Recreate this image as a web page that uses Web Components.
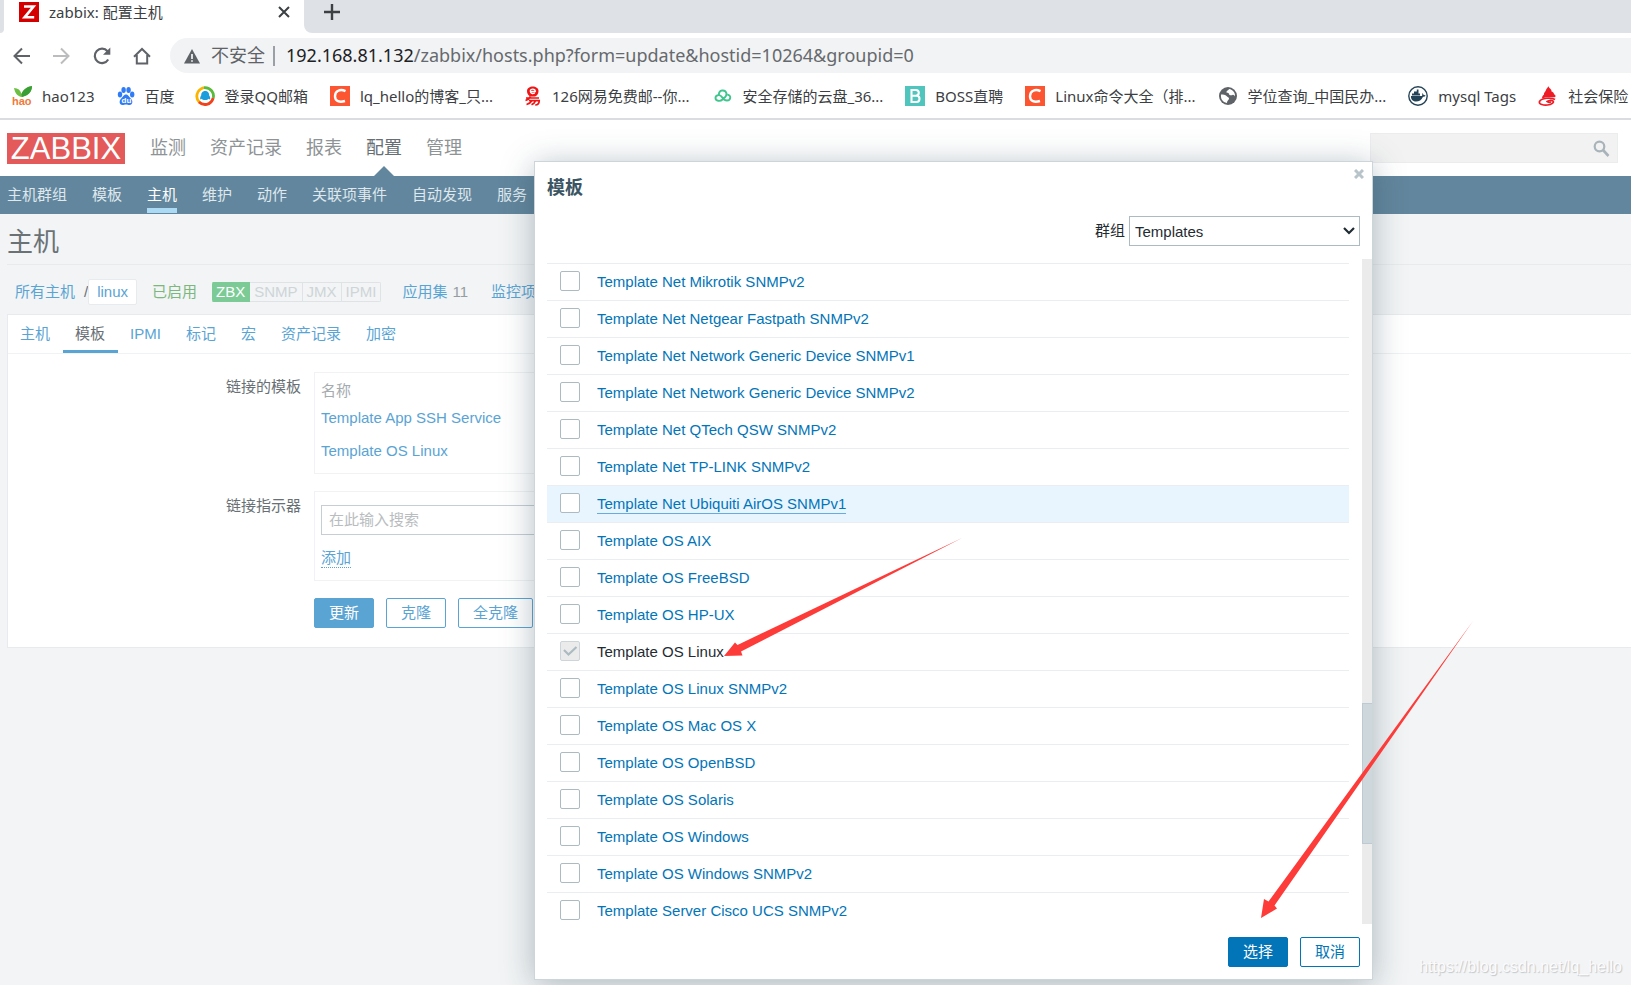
<!DOCTYPE html>
<html lang="zh-CN">
<head>
<meta charset="utf-8">
<title>zabbix: 配置主机</title>
<style>
  html { background: #f2f4f5; }
  body {
    margin: 0; position: relative; min-height: 100vh; overflow: hidden;
    font: 15px/20px "Liberation Sans", "Noto Sans CJK SC", sans-serif; color: #1f2c33;
  }
</style>
</head>
<body>
<browser-chrome></browser-chrome>
<zbx-header></zbx-header>
<host-page></host-page>
<template-dialog></template-dialog>
<arrow-marks></arrow-marks>
<site-mark>https://blog.csdn.net/lq_hello</site-mark>

<script>
const base = `:host, *, *::before, *::after { box-sizing: border-box; } a { text-decoration: none; color: inherit; } button, input, select { font: inherit; margin: 0; }`;

function define(name, html) {
  customElements.define(name, class extends HTMLElement {
    constructor() {
      super();
      this.attachShadow({ mode: 'open' }).innerHTML = `<style>${base}</style>` + html(this);
    }
  });
}

define('bookmark-item', () => `
  <style>
    :host { display: block; flex: none; }
    a { display: flex; align-items: center; gap: 10px; height: 24px; white-space: nowrap; }
    ::slotted(svg) { display: block; flex: none; }
  </style>
  <a href="#"><slot name="icon"></slot><slot></slot></a>`);

define('browser-chrome', () => `
  <style>
    :host { display: block; height: 120px; overflow: hidden; background: #fff; border-bottom: 2px solid #dadce0; color: #3c4043;
      font-family: "Noto Sans", "Noto Sans CJK SC", sans-serif; }
    .strip { display: flex; height: 33px; background: #dee1e6; }
    .edge { width: 4px; height: 33px; background: #dee1e6; border-bottom-right-radius: 4px; }
    .lead { background: #fff; }
    .tab { display: flex; align-items: center; width: 300px; height: 33px; padding: 0 13px 9px 15px; background: #fff; }
    .tab span { flex: 1; margin-left: 10px; font-size: 15px; }
    .rest { flex: 1; display: flex; align-items: center; padding: 0 0 9px 20px; background: #dee1e6; border-bottom-left-radius: 8px; }
    .rest-wrap { flex: 1; display: flex; background: #fff; }
    button { display: flex; border: 0; padding: 0; background: none; }
    .bar { display: flex; align-items: center; height: 45px; padding-left: 12px; gap: 20px; }
    .url { flex: 1; display: flex; align-items: center; height: 35px; margin-left: -2px; padding-left: 14px; border-radius: 18px 0 0 18px; background: #f1f3f4; font-size: 18px; line-height: 24px; color: #5f6368; }
    .url span { padding-bottom: 2px; }
    .url .safe { margin: 0 8px 0 11px; white-space: nowrap; }
    .url i { width: 2px; height: 20px; background: #9aa0a6; margin-right: 11px; }
    .addr { white-space: nowrap; color: #66696d; }
    .addr b { font-weight: 400; color: #202124; }
    nav { display: flex; gap: 22px; height: 40px; padding: 6px 0 0 12px; }
    .near { margin-left: -2px; }
    .wide { margin-left: 9px; }
    .mid { margin-left: 3px; }
  </style>
  <div class="strip">
    <div class="lead"><div class="edge"></div></div>
    <div class="tab">
      <svg width="20" height="20" viewBox="0 0 20 20"><path fill="#d40000" d="M0 0h20v20H0z"/><path d="M5 4.500h9.500L5.600 15.300H15.200" fill="none" stroke="#fff" stroke-width="2.600"/></svg>
      <span>zabbix: 配置主机</span>
      <button aria-label="关闭标签页"><svg width="14" height="14" viewBox="0 0 14 14"><path d="M2 2l10 10M12 2L2 12" stroke="#3c4043" stroke-width="2"/></svg></button>
    </div>
    <div class="rest-wrap"><div class="rest"><button aria-label="新标签页"><svg width="16" height="16" viewBox="0 0 16 16"><path d="M8 0v16M0 8h16" stroke="#3c4043" stroke-width="2.400"/></svg></button></div></div>
  </div>
  <div class="bar">
    <button aria-label="后退"><svg width="20" height="20" viewBox="0 0 20 20"><path d="M18 10H3M10 2.500L2.500 10l7.500 7.500" fill="none" stroke="#5f6368" stroke-width="2"/></svg></button>
    <button aria-label="前进"><svg width="20" height="20" viewBox="0 0 20 20"><path d="M1 10h15M9 2.500L16.500 10 9 17.500" fill="none" stroke="#babcbe" stroke-width="2"/></svg></button>
    <button aria-label="重新加载"><svg width="20" height="20" viewBox="0 0 20 20"><path d="M16.200 13.500A7.200 7.200 0 1 1 15.500 5.200" fill="none" stroke="#5f6368" stroke-width="2.200"/><path d="M18.300 1.500v7.300h-7.300z" fill="#5f6368"/></svg></button>
    <button aria-label="主页"><svg width="20" height="20" viewBox="0 0 20 20"><path d="M2 10.700L10 3l8 7.700M4.800 9v8.500h10.400V9" fill="none" stroke="#5f6368" stroke-width="2"/></svg></button>
    <div class="url">
      <svg width="16" height="16" viewBox="0 0 16 16"><path d="M8 1l8 14.500H0z" fill="#5f6368"/><path d="M7.200 6h1.600v5H7.200zM7.200 12.200h1.600v1.600H7.200z" fill="#fff"/></svg>
      <span class="safe">不安全</span><i></i>
      <span class="addr"><b>192.168.81.132</b>/zabbix/hosts.php?form=update&amp;hostid=10264&amp;groupid=0</span>
    </div>
  </div>
  <nav aria-label="书签">
    <bookmark-item><svg slot="icon" width="20" height="20" viewBox="0 0 20 20"><path d="M2 2c4 0 6.500 2 7.500 6C11 4 14 1 20 0c0 6-4 9.500-10 11C5.500 10.500 3 7 2 2z" fill="#6cbf43"/><path d="M9.500 8C11 4 14 1 20 0c0 6-4 9.500-10 11z" fill="#3a9e36"/><text x="0" y="19" font-family="Liberation Sans" font-weight="bold" font-size="11" fill="#f07a3a">hao</text></svg>hao123</bookmark-item>
    <bookmark-item><svg slot="icon" width="18" height="20" viewBox="0 0 18 20"><g fill="#2f7cf6"><ellipse cx="3" cy="8.500" rx="2.200" ry="2.900"/><ellipse cx="6.600" cy="4" rx="2.200" ry="3"/><ellipse cx="11.600" cy="4" rx="2.200" ry="3"/><ellipse cx="15.200" cy="8.500" rx="2.200" ry="2.900"/><path d="M9 8.500c2.500 0 3 2.500 5 4.300 2 1.700 2 6.200-1.500 6.200-1.500 0-2-.500-3.500-.500S7 19 5.500 19C2 19 2 14.500 4 12.800 6 11 6.500 8.500 9 8.500z"/></g><text x="4.500" y="17" font-family="Liberation Sans" font-weight="bold" font-size="8" fill="#fff">du</text></svg>百度</bookmark-item>
    <bookmark-item class="near"><svg slot="icon" width="20" height="20" viewBox="0 0 20 20"><g fill="none" stroke-width="2.800"><path d="M4.500 16.500C0 12 1 4 9 1.500" stroke="#fbb500"/><path d="M9 1.600c7-.500 10.500 6 9.200 10.400" stroke="#5aba3c"/><path d="M18.200 12C16 19.500 8 20 4 16" stroke="#f0421c"/></g><path d="M10.200 5c3 0 4 2.200 4 4.500 1 1.200 1.300 3.500.700 3.900l-1.400-.700c-.500 1.800-6.300 1.800-6.800 0l-1.200.700c-.600-.500-.400-2.700.700-3.900 0-2.300 1-4.500 4-4.500z" fill="#1b9ddb"/></svg>登录QQ邮箱</bookmark-item>
    <bookmark-item><svg slot="icon" width="20" height="20" viewBox="0 0 20 20"><path fill="#fc5531" d="M0 0h20v20H0z"/><path d="M15.500 5.200C10 2.500 5 5 5 10.300c0 5 4.500 6.500 10 4.700" fill="none" stroke="#fff" stroke-width="2.400"/></svg>lq_hello的博客_只...</bookmark-item>
    <bookmark-item class="wide"><svg slot="icon" width="18" height="20" viewBox="0 0 18 20"><path d="M3 5c0-6 11.500-6 11.500 0 0 3-1.500 4.500-3.500 5.500H6.500C4.500 9.500 3 8 3 5z" fill="#f01414"/><path d="M6.300 5.500h5C11.300 2.300 6.300 2.300 6.300 5s2.700 3 4.500 1.900" fill="none" stroke="#fff" stroke-width="1.300"/><path d="M2 12h13M6.500 10.500Q5 13.500 1.500 14.500M5 14.700h10.200c0 3-1 4.300-4 4.300M8 14.700Q6.500 17.500 2.500 18.500M11.500 14.700q-.800 2.500-4 4" fill="none" stroke="#f01414" stroke-width="1.700"/></svg>126网易免费邮--你...</bookmark-item>
    <bookmark-item class="mid"><svg slot="icon" width="18" height="18" viewBox="0 0 18 18"><path d="M5 8C4 2.500 11.500 2 12.500 6.500c.500 3-2.500 4.500-4 6-2 2-7 2-7-1.500 0-3.500 4.500-3.500 6-1.500 1 1.500 2.500 4 5.500 4 4 0 4.500-5.500.500-5.800" fill="none" stroke="#3fc58d" stroke-width="1.900"/></svg>安全存储的云盘_36...</bookmark-item>
    <bookmark-item><svg slot="icon" width="20" height="20" viewBox="0 0 20 20"><path fill="#4fc5bd" d="M0 0h20v20H0z"/><path d="M6.500 4h4.300c4 0 4 5.700 0 5.700H6.500zM6.500 9.700h5c4 0 4 6.300 0 6.300h-5z" fill="none" stroke="#fff" stroke-width="2.100"/></svg>BOSS直聘</bookmark-item>
    <bookmark-item><svg slot="icon" width="20" height="20" viewBox="0 0 20 20"><path fill="#fc5531" d="M0 0h20v20H0z"/><path d="M15.500 5.200C10 2.500 5 5 5 10.300c0 5 4.500 6.500 10 4.700" fill="none" stroke="#fff" stroke-width="2.400"/></svg>Linux命令大全（排...</bookmark-item>
    <bookmark-item><svg slot="icon" width="20" height="20" viewBox="0 0 20 20"><circle cx="10" cy="10" r="9" fill="#5f6368"/><path d="M3 8.500c2 0 4.500 0 5.500 1.500s2.500 1 2.500 2.500-1.800 1.500-2 4.500C4.500 16 2.500 13 3 8.500zM11 3c-.500 1.500-2.500 1.500-2.500 3s2.500.500 2.500 2 2.500 1.500 3.500 1 2 .500 2.500 1.500C17.500 7 15 3.500 11 3z" fill="#fff"/></svg>学位查询_中国民办...</bookmark-item>
    <bookmark-item><svg slot="icon" width="20" height="20" viewBox="0 0 20 20"><circle cx="10" cy="10" r="9.200" fill="#fff" stroke="#254356" stroke-width="1.400"/><path d="M3 10h11c.500-1 .300-2.300 0-3 1 .500 1.500 1.200 1.600 2 .800-.200 1.500 0 2 .400-.500 1-1.500 1.300-2.600 1.300C13.500 14 11 15.500 8 15.500c-3.500 0-5.300-2.500-5-5.500zM4 7.600h8v2H4zM6 5.500h4.500v2H6zM8.800 3.500h1.700v2H8.800z" fill="#254356"/></svg>mysql Tags</bookmark-item>
    <bookmark-item><svg slot="icon" width="20" height="20" viewBox="0 0 20 20"><path d="M10.500 0c-.300 2 3.500 3 3 5.500 2.500.500 2 2.500 4 4 .500 1.500-1 2-3 1.800-4-.800-8 .200-10.500 1.200C4 10 5 9.500 6 8.500 5.500 6.500 7.500 6 8 4c.500-1.500 1.500-2 2.500-4z" fill="#ee1c25"/><path d="M17 13.500C13 11 3.500 12 1.500 15.500.500 18.500 6 19.500 9.500 19c4-.500 7-2.500 5.500-4-1.500-1-5-.500-6 .500 1 1 3 .800 4 .500" fill="none" stroke="#ee1c25" stroke-width="1.700"/></svg>社会保险</bookmark-item>
  </nav>`);

define('zbx-header', () => `
  <style>
    :host { display: block; background: #fff; }
    .top { display: flex; align-items: center; height: 56px; padding: 0 13px 0 7px; }
    .logo { display: flex; width: 118px; height: 31px; justify-content: center; align-items: center; background: #e45959; color: #fff; font: 31px/31px "Liberation Sans", sans-serif; }
    .main { display: flex; gap: 24px; margin-left: 25px; font-size: 18px; line-height: 24px; color: #8e9396; }
    .main a { position: relative; }
    .main .on { color: #676f74; }
    .main .on::after { content: ""; position: absolute; left: 8px; top: 30px; border: 10px solid transparent; border-top: 0; border-bottom-color: #62869d; }
    .search { display: flex; align-items: center; margin-left: auto; width: 248px; height: 30px; padding-right: 7px; background: #f2f2f2; border: 1px solid #ebeced; }
    .search input { flex: 1; min-width: 0; border: 0; background: none; outline: 0; }
    .search button { display: flex; border: 0; padding: 0; background: none; }
    .sub { display: flex; gap: 25px; height: 38px; padding: 0 7px; background: #62869d; color: #dfe8ed; line-height: 38px; }
    .sub a { height: 37px; white-space: nowrap; }
    .sub .on { color: #fff; border-bottom: 5px solid #acdaf5; }
  </style>
  <div class="top">
    <a href="#" class="logo">ZABBIX</a>
    <nav class="main"><a href="#">监测</a><a href="#">资产记录</a><a href="#">报表</a><a href="#" class="on">配置</a><a href="#">管理</a></nav>
    <div class="search"><input type="text" aria-label="搜索"><button aria-label="搜索"><svg width="17" height="17" viewBox="0 0 17 17"><circle cx="6.500" cy="6.500" r="4.800" fill="none" stroke="#a9b4ba" stroke-width="2.200"/><path d="M10 10l5.500 6" stroke="#a9b4ba" stroke-width="2.600"/></svg></button></div>
  </div>
  <nav class="sub"><a href="#">主机群组</a><a href="#">模板</a><a href="#" class="on">主机</a><a href="#">维护</a><a href="#">动作</a><a href="#">关联项事件</a><a href="#">自动发现</a><a href="#">服务</a></nav>`);

define('host-page', () => `
  <style>
    :host { display: block; padding-left: 7px; color: #697075; }
    h1 { margin: 0; height: 51px; border-bottom: 1px solid #e8ebed; font-size: 26px; line-height: 56px; font-weight: 400; color: #6b7276; }
    a { color: #5aa4d4; white-space: nowrap; }
    .crumbs { display: flex; align-items: center; height: 49px; padding: 5px 0 0 8px; }
    .crumbs .cur { display: block; height: 26px; padding: 0 8px; border: 1px solid #e8ebed; border-radius: 2px; background: #fff; line-height: 24px; }
    .slash { margin: 0 0 0 9px; }
    .ok { color: #7db77d; margin: 0 15px; }
    .tags { display: flex; height: 20px; margin-right: 21px; border-radius: 2px; overflow: hidden; line-height: 20px; color: #ced4d8; }
    .tags span { padding: 0 4px; border: 1px solid #dfe3e6; border-left: 0; line-height: 18px; }
    .tags .on { background: #7ccb96; border-color: #7ccb96; color: #fff; }
    .count { margin: 0 23px 0 5px; color: #969ca0; }
    .panel { background: #fff; border: 1px solid #e8ebed; border-right: 0; }
    .tabs { display: flex; height: 39px; border-bottom: 1px solid #f0f2f3; }
    .tabs a { padding: 0 13px 0 12px; line-height: 38px; }
    .tabs .on { color: #697075; border-bottom: 3px solid #5aa4d4; }
    form { display: grid; grid-template-columns: 293px 600px; column-gap: 13px; row-gap: 17px; padding: 18px 0 19px; }
    .label { text-align: right; padding-top: 5px; }
    .box { border: 1px solid #f0f2f3; padding: 0 6px; }
    .linked { height: 102px; padding-top: 8px; }
    .linked table { border-collapse: collapse; }
    th { padding: 0; text-align: left; font-weight: 400; height: 20px; color: #a5abaf; }
    td { padding: 0; height: 33px; }
    .pick { height: 90px; padding-top: 13px; }
    .pick input { display: block; width: 480px; height: 30px; padding: 0 7px 2px; border: 1px solid #c5ced3; background: #fff; color: #697075; }
    .pick input::placeholder { color: #b9bdc0; }
    .pick a { display: inline-block; margin-top: 13px; line-height: 19px; height: 20px; border-bottom: 1px dotted #5aa4d4; }
    .actions { grid-column: 2; display: flex; gap: 12px; }
    .actions button { height: 30px; padding: 0 14px; border: 1px solid #5aa4d4; border-radius: 2px; background: #fff; color: #5aa4d4; line-height: 26px; white-space: nowrap; }
    .actions .go { background: #5aa4d4; color: #fff; }
  </style>
  <h1>主机</h1>
  <div class="crumbs">
    <a href="#">所有主机</a><span class="slash">/</span><a href="#" class="cur">linux</a>
    <span class="ok">已启用</span>
    <div class="tags"><span class="on">ZBX</span><span>SNMP</span><span>JMX</span><span>IPMI</span></div>
    <a href="#">应用集</a><span class="count">11</span><a href="#">监控项</a>
  </div>
  <div class="panel">
    <nav class="tabs"><a href="#">主机</a><a href="#" class="on">模板</a><a href="#">IPMI</a><a href="#">标记</a><a href="#">宏</a><a href="#">资产记录</a><a href="#">加密</a></nav>
    <form onsubmit="return false">
      <div class="label">链接的模板</div>
      <div class="box linked"><table><tr><th>名称</th></tr><tr><td><a href="#">Template App SSH Service</a></td></tr><tr><td><a href="#">Template OS Linux</a></td></tr></table></div>
      <label class="label" for="tpl">链接指示器</label>
      <div class="box pick"><input id="tpl" type="text" placeholder="在此输入搜索"><a href="#">添加</a></div>
      <div class="actions"><button class="go">更新</button><button>克隆</button><button>全克隆</button></div>
    </form>
  </div>`);

const templates = [
  'Net Mikrotik SNMPv2', 'Net Netgear Fastpath SNMPv2', 'Net Network Generic Device SNMPv1', 'Net Network Generic Device SNMPv2',
  'Net QTech QSW SNMPv2', 'Net TP-LINK SNMPv2', 'Net Ubiquiti AirOS SNMPv1', 'OS AIX', 'OS FreeBSD', 'OS HP-UX', 'OS Linux',
  'OS Linux SNMPv2', 'OS Mac OS X', 'OS OpenBSD', 'OS Solaris', 'OS Windows', 'OS Windows SNMPv2', 'Server Cisco UCS SNMPv2'
].map(n => 'Template ' + n);

const row = name => {
  const linked = name === 'Template OS Linux';
  const hover = name === 'Template Net Ubiquiti AirOS SNMPv1';
  return `<tr${hover ? ' class="hover"' : ''}><td class="tick"><input type="checkbox" aria-label="${name}"${linked ? ' checked disabled' : ''}></td>` +
    `<td>${linked ? name : `<a href="#">${name}</a>`}</td></tr>`;
};

define('template-dialog', () => `
  <style>
    :host { display: flex; flex-direction: column; position: absolute; left: 534px; top: 161px; width: 839px; background: #fff; border: 1px solid #cbd5da;
      box-shadow: 0 4px 30px rgba(40, 70, 85, .35); }
    header { display: flex; justify-content: space-between; height: 54px; padding: 0 8px 0 12px; }
    h2 { margin: 14px 0 0; font-size: 18px; line-height: 24px; color: #3c5563; }
    .close { display: flex; align-self: flex-start; margin-top: 7px; border: 0; padding: 0; background: none; }
    .filter { display: flex; justify-content: flex-end; align-items: center; gap: 4px; height: 30px; padding-right: 12px; }
    .pick { display: grid; width: 231px; }
    .pick > * { grid-area: 1 / 1; }
    select { appearance: none; width: 100%; height: 30px; padding: 1px 5px 0; border: 1px solid #acbbc2; border-radius: 0; background: #fff; color: #1f2c33; }
    .pick svg { justify-self: end; align-self: center; margin-right: 5px; pointer-events: none; }
    .list { display: flex; justify-content: space-between; height: 665px; margin-top: 13px; overflow: hidden; }
    table { width: 802px; margin: 4px 0 0 12px; border-collapse: collapse; align-self: flex-start; }
    td { height: 37px; padding: 0; border-top: 1px solid #ebeef0; }
    .tick { width: 50px; padding: 0 0 3px 13px; }
    .hover { background: #e8f5ff; }
    td a { color: #0275b8; display: inline-block; line-height: 18px; }
    .hover a { border-bottom: 1px solid #67ace0; }
    input { appearance: none; display: block; width: 20px; height: 20px; border: 1px solid #acbbc2; border-radius: 2px; background: #fff; }
    input:checked { border-color: #cbd5da; background: #ebebeb url("data:image/svg+xml,%3Csvg xmlns='http://www.w3.org/2000/svg' viewBox='0 0 18 18'%3E%3Cpath d='M3 8l4.500 4.500L15.500 5' fill='none' stroke='%23acbbc2' stroke-width='2.200'/%3E%3C/svg%3E"); }
    .track { width: 10px; background: #ebebeb; padding-top: 444px; }
    .thumb { height: 141px; background: #ced7dc; border: 1px solid #bccad2; border-right: 0; }
    footer { display: flex; justify-content: flex-end; gap: 12px; padding: 13px 12px 12px; }
    footer button { width: 60px; height: 30px; padding: 0; border: 1px solid #0275b8; border-radius: 2px; background: #fff; color: #0275b8; line-height: 26px; }
    footer .go { background: #0275b8; color: #fff; }
  </style>
  <header><h2>模板</h2><button class="close" aria-label="关闭"><svg width="10" height="10" viewBox="0 0 10 10"><path d="M1 1l8 8M9 1L1 9" stroke="#b8c4ca" stroke-width="3"/></svg></button></header>
  <div class="filter"><label for="group">群组</label><div class="pick"><select id="group"><option>Templates</option></select><svg width="12" height="8" viewBox="0 0 12 8"><path d="M1 1l5 5 5-5" fill="none" stroke="#1f2c33" stroke-width="2.200"/></svg></div></div>
  <div class="list"><table><tbody>${templates.map(row).join('')}</tbody></table><div class="track"><div class="thumb"></div></div></div>
  <footer><button class="go">选择</button><button>取消</button></footer>`);

define('arrow-marks', () => `
  <style>
    :host { display: block; position: absolute; left: 724px; top: 538px; pointer-events: none; }
    svg { display: block; }
  </style>
  <svg width="750" height="381" viewBox="724 538 750 381" fill="#fd3b39" aria-hidden="true">
    <path d="M724 656l11-13.500 2.500 2.500L962 538 741 651.500l1.500 4z"/>
    <path d="M1261 918l3-19 4.500 2.500L1473 621 1274.500 905.500l2.500 3z"/>
  </svg>`);

define('site-mark', () => `
  <style>:host { display: block; position: absolute; right: 9px; bottom: 7px; font-size: 16px; line-height: 22px; color: #fbfbfc; text-shadow: 1px 1px 1px #c2c5c8; }</style>
  <slot></slot>`);
</script>
</body>
</html>
